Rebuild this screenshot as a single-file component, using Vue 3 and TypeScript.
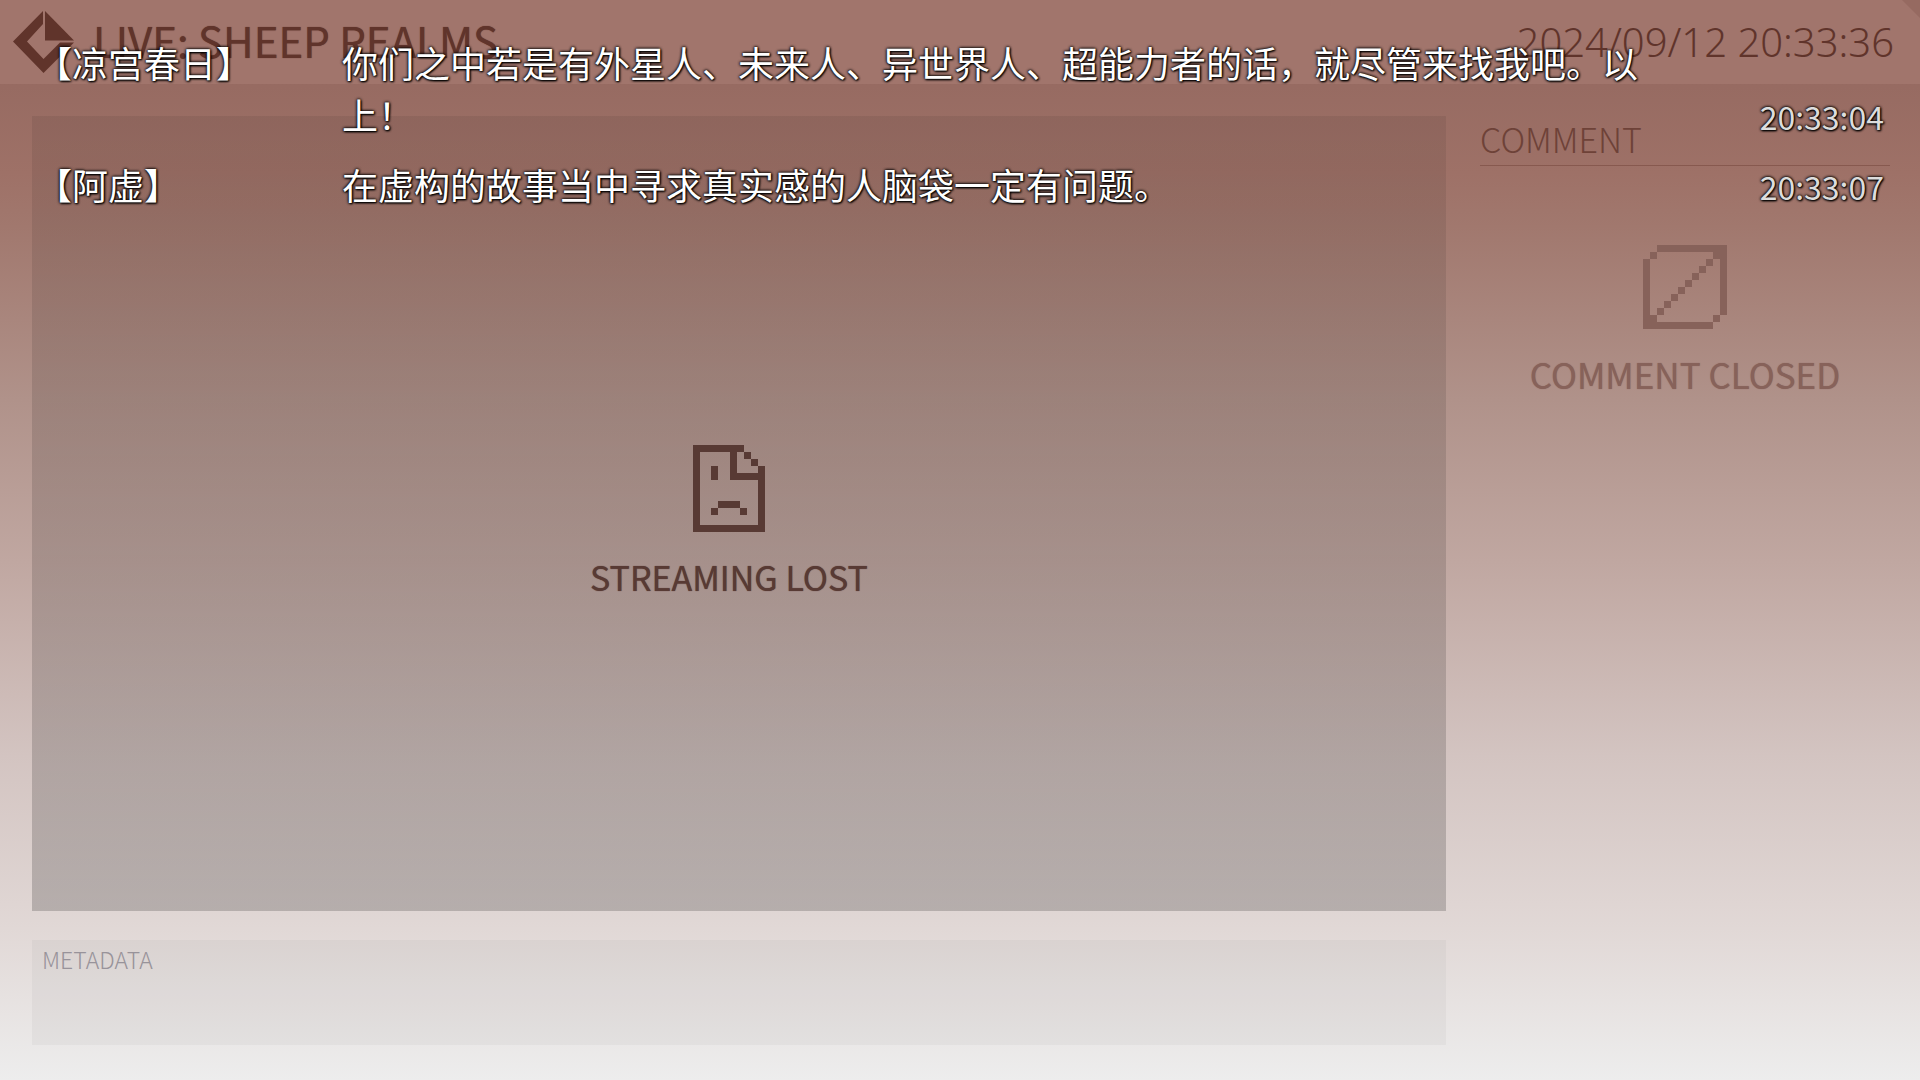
<script setup lang="ts">
interface Line {
  name: string
  text: string
  time: string
}

const lines: Line[] = [
  {
    name: '【凉宫春日】',
    text: '你们之中若是有外星人、未来人、异世界人、超能力者的话，就尽管来找我吧。以上！',
    time: '20:33:04',
  },
  { name: '【阿虚】', text: '在虚构的故事当中寻求真实感的人脑袋一定有问题。', time: '20:33:07' },
]
</script>

<template>
  <div class="screen">
    <header class="bar">
      <svg class="logo" viewBox="0 0 62 62" aria-hidden="true">
        <path d="M30 0v13L14 30.500 30.500 48 47 31.500h14L30.500 62 0 30.500z" />
        <path d="M32 0l29 29.500H32z" />
      </svg>
      <h1 class="title">LIVE: SHEEP REALMS</h1>
      <time class="clock">2024/09/12 20:33:36</time>
      <span class="corner"></span>
    </header>

    <main class="body">
      <div class="left">
        <section class="stage">
          <svg class="lost-icon" viewBox="0 0 72 87" shape-rendering="crispEdges" aria-hidden="true">
            <path
              d="M0 0h51v7h-7v21h21v-7h7v66H0zM7 7v73h58V35H37V7zM51 7h7v7h-7zM58 14h7v7h-7zM18 21h7v14h-7zM25 56h22v7H25zM18 63h7v7h-7zM47 63h7v7h-7z"
              fill-rule="evenodd"
            />
          </svg>
          <p class="lost-text">STREAMING LOST</p>
        </section>
        <section class="meta">
          <h2 class="meta-title">METADATA</h2>
        </section>
      </div>
      <aside class="comments">
        <h2 class="comments-title">COMMENT</h2>
        <div class="closed">
          <svg class="closed-icon" viewBox="0 0 12 12" shape-rendering="crispEdges" aria-hidden="true">
            <path
              d="M2 0h10v10h-1V2h-1V1H2zM1 1h1v1H1zM0 2h1v8h1v1h8v1H0zM10 10h1v1h-1zM9 2h1v1H9zM8 3h1v1H8zM7 4h1v1H7zM6 5h1v1H6zM5 6h1v1H5zM4 7h1v1H4zM3 8h1v1H3zM2 9h1v1H2z"
            />
          </svg>
          <p class="closed-text">COMMENT CLOSED</p>
        </div>
      </aside>
    </main>

    <ol class="dialogue">
      <li v-for="line in lines" :key="line.time" class="line">
        <span class="name">{{ line.name }}</span>
        <span class="speech">{{ line.text }}</span>
        <time class="time">{{ line.time }}</time>
      </li>
    </ol>
  </div>
</template>

<style>
body {
  margin: 0;
}
</style>

<style scoped>
.screen {
  position: relative;
  display: flex;
  flex-direction: column;
  min-height: 100vh;
  box-sizing: border-box;
  font-family: 'Noto Sans CJK SC', sans-serif;
  color: #60342b;
  background: linear-gradient(#8f6259 0, #976b62 8%, #9e7167 16%, #a1786e 21%, #b0928a 37%, #c0a7a1 52%, #d3c4c1 70%, #e1d8d6 86%, #ededed 100%);
}

h1,
h2,
p,
ol {
  margin: 0;
  padding: 0;
  font-weight: 400;
}

.bar {
  position: relative;
  display: flex;
  align-items: center;
  height: 84px;
  box-sizing: border-box;
  padding: 0 26px 0 13px;
  background: #a1756c;
}

.logo {
  width: 62px;
  height: 62px;
  fill: currentColor;
}

.title {
  margin-left: 18px;
  padding-bottom: 4px;
  font-size: 42px;
  line-height: 60px;
}

.title,
.lost-text,
.closed-text {
  text-shadow: 0 0 1px currentColor;
}

.clock {
  margin-left: auto;
  font-family: 'Noto Sans', sans-serif;
  font-size: 40px;
  line-height: 60px;
  font-weight: 300;
}

.corner {
  position: absolute;
  top: 0;
  right: 0;
  width: 18px;
  height: 18px;
  background: #966a61;
  clip-path: polygon(0 0, 100% 0, 100% 100%);
}

.body {
  display: flex;
  flex: 1;
  gap: 34px;
  padding: 32px 30px 35px 32px;
}

.left {
  display: flex;
  flex: 1;
  flex-direction: column;
  gap: 29px;
}

.stage {
  display: flex;
  flex: 1;
  flex-direction: column;
  align-items: center;
  justify-content: center;
  gap: 20px;
  padding: 20px 20px 0 0;
  background: linear-gradient(rgba(0, 0, 0, 0.07), rgba(0, 0, 0, 0.19));
}

.lost-icon {
  width: 72px;
  height: 87px;
  fill: #583a34;
}

.lost-text {
  font-size: 34px;
  line-height: 50px;
  color: #583a34;
}

.meta {
  height: 105px;
  box-sizing: border-box;
  padding: 4px 10px;
  background: rgba(0, 0, 0, 0.03);
}

.meta-title {
  font-size: 23px;
  line-height: 30px;
  font-weight: 300;
  color: #98939a;
}

.comments {
  width: 410px;
}

.comments-title {
  padding-bottom: 4px;
  font-size: 34px;
  line-height: 45px;
  font-weight: 300;
  color: #6e4238;
  border-bottom: 1px solid #87594f;
}

.closed {
  display: flex;
  flex-direction: column;
  align-items: center;
  gap: 20px;
  margin-top: 79px;
}

.closed-icon {
  width: 84px;
  height: 84px;
  fill: #87625a;
}

.closed-text {
  font-size: 35px;
  line-height: 50px;
  color: #87625a;
}

.dialogue {
  position: absolute;
  top: 36px;
  left: 36px;
  right: 36px;
  display: flex;
  flex-direction: column;
  gap: 18px;
  list-style: none;
  font-size: 36px;
  line-height: 52px;
  color: #fff;
  text-shadow: 0 0 3px #000, 0 0 3px #000, 1px 1px 2px #000;
}

.line {
  display: flex;
}

.name {
  flex: 0 0 306px;
}

.speech {
  flex: 1;
  padding-right: 60px;
}

.time {
  align-self: flex-end;
  font-size: 32px;
  line-height: 48px;
  color: #ddd;
}
</style>
